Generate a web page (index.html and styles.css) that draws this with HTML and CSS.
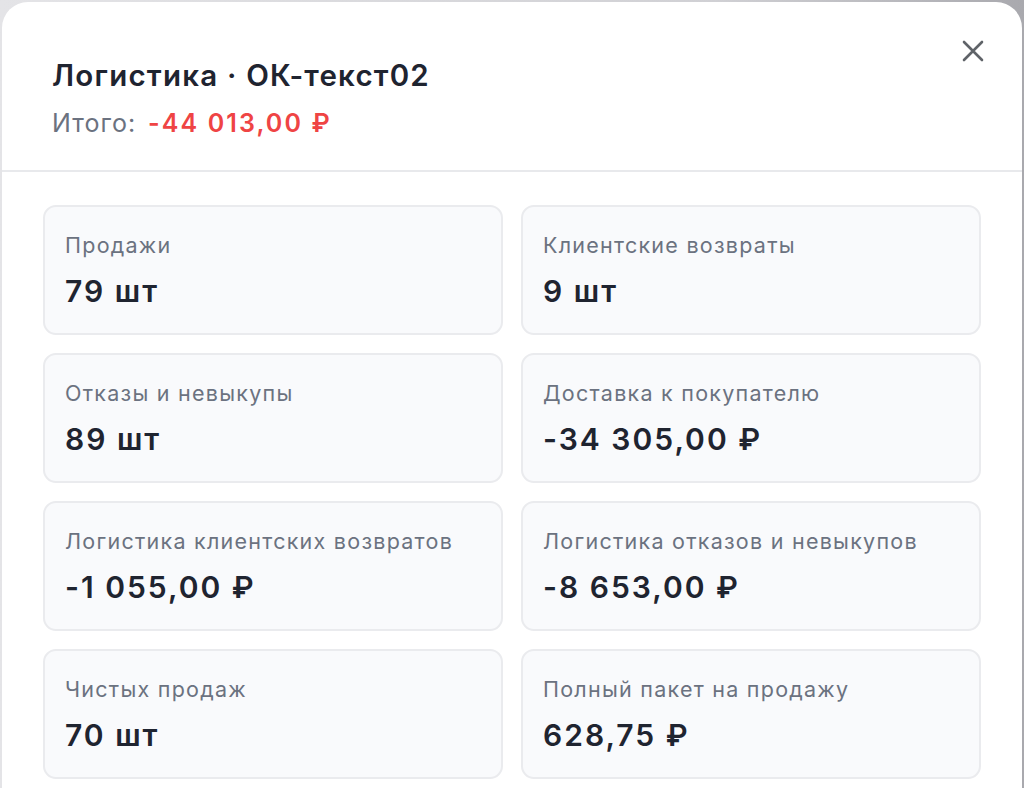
FILE: index.html
```html
<!DOCTYPE html>
<html lang="ru">
<head>
<meta charset="utf-8">
<link rel="stylesheet" href="styles.css">
</head>
<body>
<div class="backdrop">
  <div class="modal">
    <div class="modal-header">
      <h2 class="title">Логистика · ОК-текст02</h2>
      <div class="total"><span class="total-label">Итого:</span><span class="total-value">-44 013,00 ₽</span></div>
      <button class="close" aria-label="Закрыть">
        <svg width="24" height="24" viewBox="0 0 24 24"><path d="M3 3 L21 21 M21 3 L3 21" stroke="#5f6368" stroke-width="2.6" stroke-linecap="round" fill="none"/></svg>
      </button>
    </div>
    <div class="modal-body">
      <div class="card"><div class="label">Продажи</div><div class="value">79 шт</div></div>
      <div class="card"><div class="label">Клиентские возвраты</div><div class="value">9 шт</div></div>
      <div class="card"><div class="label">Отказы и невыкупы</div><div class="value">89 шт</div></div>
      <div class="card"><div class="label">Доставка к покупателю</div><div class="value">-34 305,00 ₽</div></div>
      <div class="card"><div class="label">Логистика клиентских возвратов</div><div class="value">-1 055,00 ₽</div></div>
      <div class="card"><div class="label">Логистика отказов и невыкупов</div><div class="value">-8 653,00 ₽</div></div>
      <div class="card"><div class="label">Чистых продаж</div><div class="value">70 шт</div></div>
      <div class="card"><div class="label">Полный пакет на продажу</div><div class="value">628,75 ₽</div></div>
    </div>
  </div>
</div>
</body>
</html>
```

FILE: styles.css
```css
* { box-sizing: border-box; }
html, body { margin: 0; padding: 0; }
body {
  width: 1024px;
  height: 788px;
  overflow: hidden;
  font-family: Inter, "Noto Sans", "DejaVu Sans", sans-serif;
  background: linear-gradient(90deg, #e4e4e7 0%, #d0d0d4 70%, #a9a9ae 100%);
}
.backdrop {
  padding: 2px 2px 0 2px;
  height: 788px;
}
.modal {
  background: #ffffff;
  border-radius: 26px 26px 0 0;
  height: 800px;
}
.modal-header {
  position: relative;
  padding: 54px 50px 30px 50px;
  border-bottom: 2px solid #e8e9ec;
}
.title {
  margin: 0;
  font-size: 29.5px;
  line-height: 38px;
  font-weight: 600;
  color: #1f2430;
  letter-spacing: 1.2px;
}
.total {
  margin-top: 12px;
  display: flex;
  align-items: baseline;
  gap: 12px;
  font-size: 25px;
  line-height: 34px;
}
.total-label { color: #6b7280; letter-spacing: 1px; }
.total-value { color: #ef4444; font-weight: 600; letter-spacing: 2.1px; }
.close {
  position: absolute;
  top: 37px;
  right: 37px;
  width: 24px;
  height: 24px;
  padding: 0;
  border: 0;
  background: none;
  display: flex;
}
.modal-body {
  display: grid;
  grid-template-columns: 1fr 1fr;
  gap: 18px;
  padding: 33px 41px 0 41px;
}
.card {
  height: 130px;
  background: #f9fafc;
  border: 2px solid #eaebee;
  border-radius: 13px;
  padding: 24px 20px 0 20px;
}
.label {
  font-size: 21.5px;
  line-height: 28px;
  color: #6b7280;
  letter-spacing: 1.25px;
}
.value {
  margin-top: 14px;
  font-size: 30px;
  line-height: 36px;
  font-weight: 600;
  color: #1f2430;
  letter-spacing: 2px;
}
```
